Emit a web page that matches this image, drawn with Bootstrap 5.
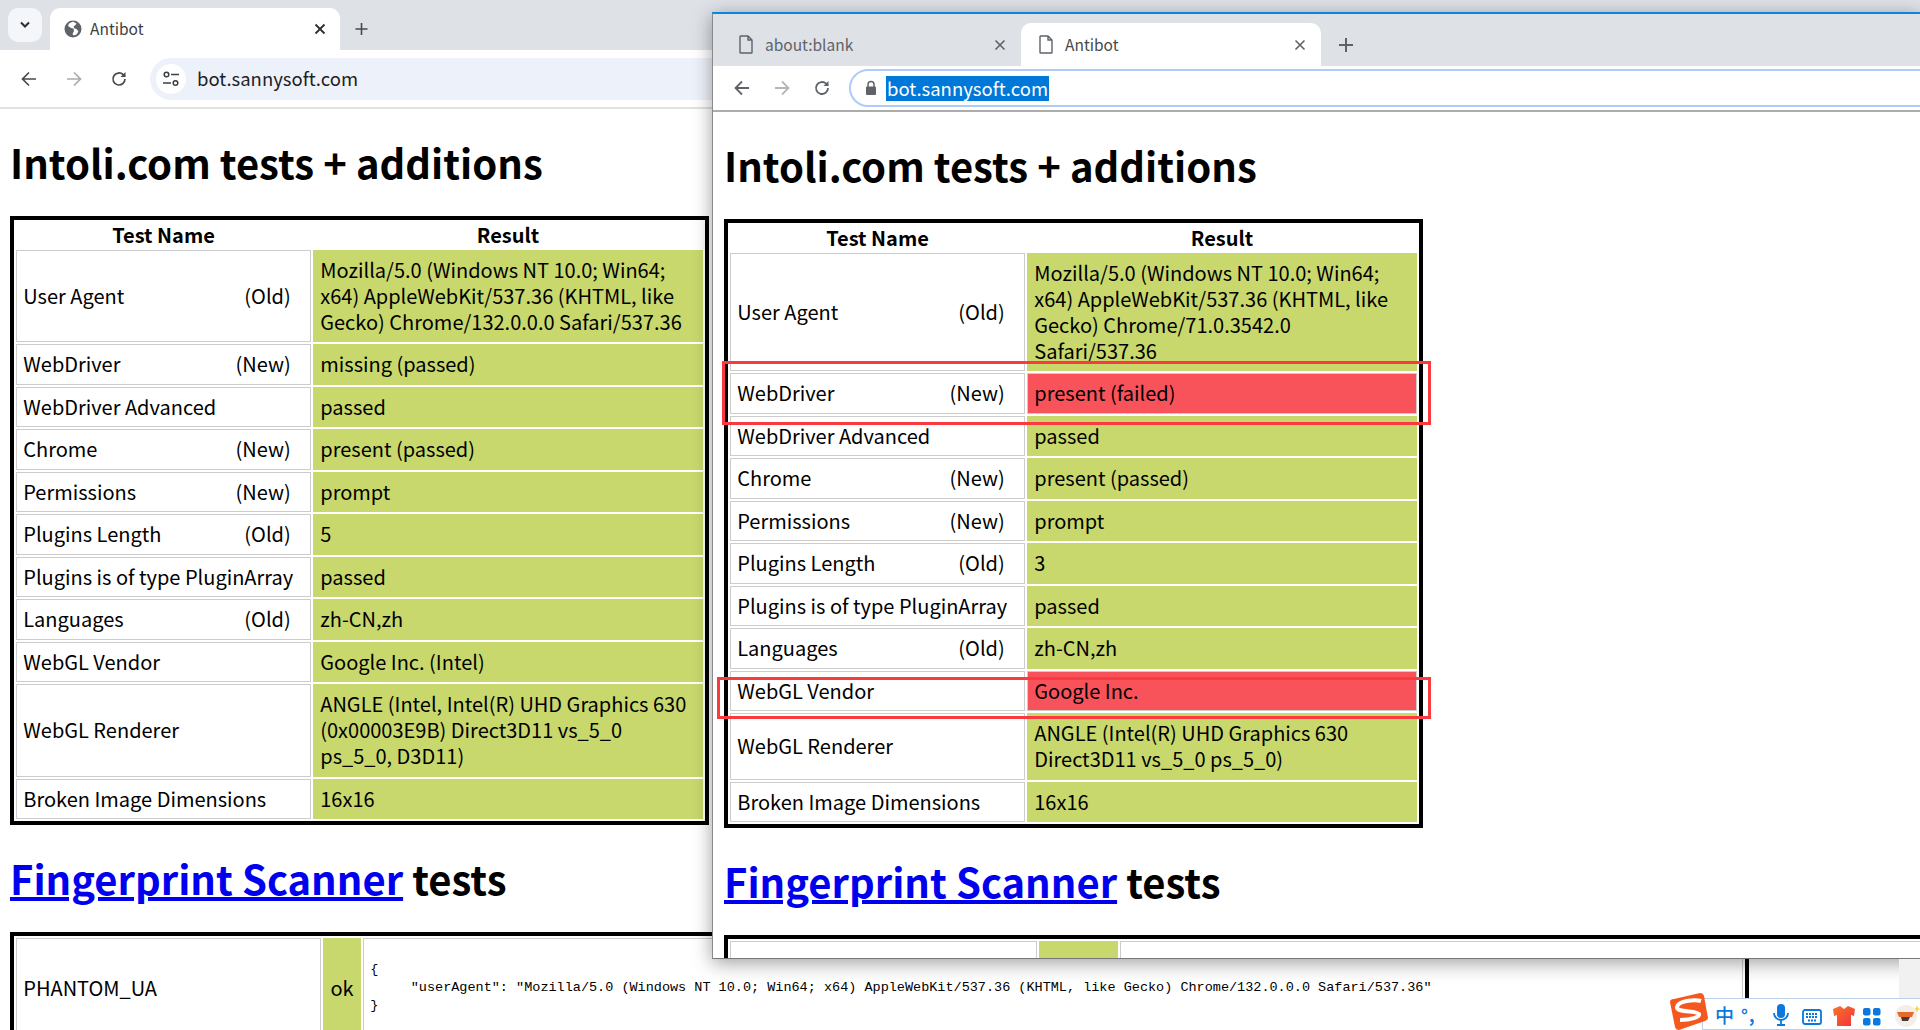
<!DOCTYPE html>
<html lang="en">
<head>
<meta charset="utf-8">
<title>Antibot</title>
<link href="https://cdn.jsdelivr.net/npm/bootstrap@5.3.0/dist/css/bootstrap.min.css" rel="stylesheet">
<style>
html,body{height:1030px;overflow:hidden;background:#fff;}
body{font-family:"Noto Sans CJK SC","Noto Sans",sans-serif;color:#000;position:relative;}
.win{background:#fff;overflow:hidden;}
.win-back{width:1920px;height:1030px;}
.win-front{position:absolute;left:712px;top:12px;right:0;height:947px;border-top:2px solid #0a86dc;border-left:1px solid #8a8a8a;border-bottom:1px solid #777;box-shadow:0 4px 18px rgba(0,0,0,.38);}
.strip-new{height:50px;background:#dee1e6;padding-left:8px;}
.strip-old{height:52px;background:#dee1e6;padding-top:9px;padding-left:8px;}
.list-btn{width:34px;height:34px;margin-top:8px;background:#f4f6fa;border-radius:10px;margin-right:8px;}
.tab-new{width:290px;height:42px;margin-top:8px;background:#fff;border-radius:10px 10px 0 0;padding:0 14px;font-size:15.5px;color:#3c4043;}
.tab-old{width:300px;height:43px;border-radius:10px 10px 0 0;padding:0 15px 0 18px;font-size:15.5px;color:#5f6368;}
.tab-on{background:#fff;color:#45494d;}
.tab-name{margin-left:8px;}
.tab-name-old{margin-left:12px;}
.plus-new{margin-left:14px;margin-top:8px;}
.plus-old{margin-left:17px;}
.bar-new{height:59px;border-bottom:2px solid #e1e1e1;border-radius:12px 0 0 0;margin-top:0;padding-left:6px;background:#fff;}
.bar-old{height:46px;border-bottom:2px solid #acacac;padding-left:9px;}
.bar-btn{width:45px;}
.bar-btn-old{width:40px;}
.pill-new{width:1400px;height:42px;margin-left:9px;background:#edf2fa;border-radius:21px;padding-left:6px;font-size:18.5px;color:#1f2124;}
.pill-old{flex:1;height:38px;margin-left:7px;margin-right:-40px;border:2px solid #aecbfa;border-radius:19px;padding-left:14px;font-size:18.5px;}
.tune{width:30px;height:30px;background:#fff;border-radius:50%;margin-right:11px;}
.sel-url{background:#0078d7;color:#fff;margin-left:9px;line-height:25px;height:25px;padding:0 1px;}
.sheet{padding-left:11px;}
.win-back .sheet{padding-left:10px;}
.big-title{font-size:40px;line-height:53px;font-weight:700;margin:26.8px 0;}
.big-title a{color:#0000ee;text-decoration:underline;}
.tbl{border:4px solid #000;border-collapse:separate;border-spacing:2px;table-layout:fixed;font-size:20px;line-height:26px;}
.tbl-a{width:699px;}
.tbl-b{width:1739px;}
.tbl-c{width:1300px;}
.tbl th{padding:0;text-align:center;font-weight:700;}
.tbl td{border:1px solid #ccc;padding:6.25px;vertical-align:middle;}
.tbl td.good{background:#c8d86d;border-color:#c8d86d;}
.tbl td.bad{background:#f8525b;border-color:#ccc;}
.age{padding-right:13px;}
.dump{font-family:"Liberation Mono",monospace;font-size:13.5px;line-height:18px;margin:16px 0;}
.shut{height:100px;}
.redbox{position:absolute;border:3px solid #fb3a3f;pointer-events:none;}
.rb1{left:722px;top:361px;width:709px;height:64px;}
.rb2{left:717px;top:677px;width:714px;height:42px;}
.ime{position:absolute;left:1702px;top:998px;width:218px;height:32px;background:#fff;border:1px solid #bcd0ec;border-right:0;gap:0;padding-left:12px;}
.ime-zh{font-family:"Noto Sans CJK SC",sans-serif;font-size:19px;font-weight:500;line-height:1;color:#0a78dc;width:29px;}
.ime-pt{font-size:17px;font-weight:700;line-height:1;color:#0a78dc;width:34px;letter-spacing:1px;}
.ime-slot{width:34px;}
.ime-logo{position:absolute;left:1670px;top:993px;}
.scroll-side{position:absolute;left:1899px;top:959px;width:21px;height:71px;background:#f1f1f1;}
</style>
</head>
<body>

<div class="win win-back">
  <div class="strip-new d-flex">
    <div class="list-btn d-flex align-items-center justify-content-center">
      <svg width="12" height="8" viewBox="0 0 12 8"><path d="M2 1.5 6 5.5 10 1.5" fill="none" stroke="#2b2f33" stroke-width="2"/></svg>
    </div>
    <div class="tab-new d-flex align-items-center">
      <svg width="18" height="18" viewBox="0 0 18 18"><circle cx="9" cy="9" r="8.5" fill="#5f6368"/><path d="M9 1.5 5 3.5 4 6l3 2 2.500.5.500 2.500-1.500 3 1 1.500 3-1 2-3-2-2.500-2-.5-1-2 2-1.500 1-1.500-2-1z" fill="#fff"/></svg>
      <span class="tab-name">Antibot</span>
      <svg class="ms-auto" width="12" height="12" viewBox="0 0 12 12"><path d="M1.500 1.500l9 9M10.500 1.500l-9 9" stroke="#2b2f33" stroke-width="1.800"/></svg>
    </div>
    <div class="plus-new d-flex align-items-center">
      <svg width="15" height="42" viewBox="0 0 15 42"><path d="M7.500 15v12M1.500 21h12" stroke="#45494d" stroke-width="1.600"/></svg>
    </div>
  </div>
  <div class="bar-new d-flex align-items-center">
    <div class="bar-btn d-flex justify-content-center">
      <svg width="18" height="18" viewBox="0 0 18 18"><path d="M16 9H3M9 2.500 2.500 9 9 15.500" fill="none" stroke="#474a4f" stroke-width="1.700"/></svg>
    </div>
    <div class="bar-btn d-flex justify-content-center">
      <svg width="18" height="18" viewBox="0 0 18 18"><path d="M2 9h13M9 2.500 15.500 9 9 15.500" fill="none" stroke="#a9acb0" stroke-width="1.700"/></svg>
    </div>
    <div class="bar-btn d-flex justify-content-center">
      <svg width="18" height="18" viewBox="0 0 18 18"><path d="M15 9a6 6 0 1 1-1.800-4.300L15 6.500" fill="none" stroke="#474a4f" stroke-width="1.700"/><path d="M15.500 2v5h-5z" fill="#474a4f"/></svg>
    </div>
    <div class="pill-new d-flex align-items-center">
      <div class="tune d-flex align-items-center justify-content-center">
        <svg width="18" height="18" viewBox="0 0 18 18"><circle cx="4.500" cy="4.500" r="2.300" fill="none" stroke="#3c4043" stroke-width="1.500"/><path d="M9 4.500h8M1 13h8" stroke="#3c4043" stroke-width="1.500"/><circle cx="13.500" cy="13" r="2.300" fill="none" stroke="#3c4043" stroke-width="1.500"/></svg>
      </div>
      <span>bot.sannysoft.com</span>
    </div>
  </div>
  <div class="sheet">
    <h1 class="big-title">Intoli.com tests + additions</h1>
    <table class="tbl tbl-a">
      <colgroup><col style="width:295px"><col></colgroup>
      <tr><th>Test Name</th><th>Result</th></tr>
      <tr><td><div class="d-flex justify-content-between"><span>User Agent</span><span class="age">(Old)</span></div></td><td class="good">Mozilla/5.0 (Windows NT 10.0; Win64; x64) AppleWebKit/537.36 (KHTML, like Gecko) Chrome/132.0.0.0 Safari/537.36</td></tr>
      <tr><td><div class="d-flex justify-content-between"><span>WebDriver</span><span class="age">(New)</span></div></td><td class="good">missing (passed)</td></tr>
      <tr><td>WebDriver Advanced</td><td class="good">passed</td></tr>
      <tr><td><div class="d-flex justify-content-between"><span>Chrome</span><span class="age">(New)</span></div></td><td class="good">present (passed)</td></tr>
      <tr><td><div class="d-flex justify-content-between"><span>Permissions</span><span class="age">(New)</span></div></td><td class="good">prompt</td></tr>
      <tr><td><div class="d-flex justify-content-between"><span>Plugins Length</span><span class="age">(Old)</span></div></td><td class="good">5</td></tr>
      <tr><td>Plugins is of type PluginArray</td><td class="good">passed</td></tr>
      <tr><td><div class="d-flex justify-content-between"><span>Languages</span><span class="age">(Old)</span></div></td><td class="good">zh-CN,zh</td></tr>
      <tr><td>WebGL Vendor</td><td class="good">Google Inc. (Intel)</td></tr>
      <tr><td>WebGL Renderer</td><td class="good">ANGLE (Intel, Intel(R) UHD Graphics 630 (0x00003E9B) Direct3D11 vs_5_0 ps_5_0, D3D11)</td></tr>
      <tr><td>Broken Image Dimensions</td><td class="good">16x16</td></tr>
    </table>
    <h2 class="big-title"><a href="#">Fingerprint Scanner</a> tests</h2>
    <table class="tbl tbl-b">
      <colgroup><col style="width:305px"><col style="width:38px"><col></colgroup>
      <tr>
        <td>PHANTOM_UA</td>
        <td class="good text-center px-0">ok</td>
        <td><pre class="dump">{
     "userAgent": "Mozilla/5.0 (Windows NT 10.0; Win64; x64) AppleWebKit/537.36 (KHTML, like Gecko) Chrome/132.0.0.0 Safari/537.36"
}</pre></td>
      </tr>
    </table>
  </div>
</div>

<div class="win win-front">
  <div class="strip-old d-flex">
    <div class="tab-old d-flex align-items-center">
      <svg width="14" height="19" viewBox="0 0 14 19"><path d="M1 1.500A.5.500 0 0 1 1.500 1H9l4 4v12.500a.5.500 0 0 1-.5.500h-11a.5.500 0 0 1-.5-.5zM9 1v4h4" fill="none" stroke="#5f6368" stroke-width="1.400"/></svg>
      <span class="tab-name-old">about:blank</span>
      <svg class="ms-auto" width="12" height="12" viewBox="0 0 12 12"><path d="M1.500 1.500l9 9M10.500 1.500l-9 9" stroke="#5f6368" stroke-width="1.600"/></svg>
    </div>
    <div class="tab-old tab-on d-flex align-items-center">
      <svg width="14" height="19" viewBox="0 0 14 19"><path d="M1 1.500A.5.500 0 0 1 1.500 1H9l4 4v12.500a.5.500 0 0 1-.5.500h-11a.5.500 0 0 1-.5-.5zM9 1v4h4" fill="none" stroke="#5f6368" stroke-width="1.400"/></svg>
      <span class="tab-name-old">Antibot</span>
      <svg class="ms-auto" width="12" height="12" viewBox="0 0 12 12"><path d="M1.500 1.500l9 9M10.500 1.500l-9 9" stroke="#5f6368" stroke-width="1.600"/></svg>
    </div>
    <div class="plus-old d-flex align-items-center">
      <svg width="16" height="43" viewBox="0 0 16 43"><path d="M8 15v14M1 22h14" stroke="#5f6368" stroke-width="2"/></svg>
    </div>
  </div>
  <div class="bar-old d-flex align-items-center">
    <div class="bar-btn-old d-flex justify-content-center">
      <svg width="18" height="18" viewBox="0 0 18 18"><path d="M16 9H3M9 2.500 2.500 9 9 15.500" fill="none" stroke="#5f6368" stroke-width="1.800"/></svg>
    </div>
    <div class="bar-btn-old d-flex justify-content-center">
      <svg width="18" height="18" viewBox="0 0 18 18"><path d="M2 9h13M9 2.500 15.500 9 9 15.500" fill="none" stroke="#b4b7bb" stroke-width="1.800"/></svg>
    </div>
    <div class="bar-btn-old d-flex justify-content-center">
      <svg width="18" height="18" viewBox="0 0 18 18"><path d="M15 9a6 6 0 1 1-1.800-4.300L15 6.500" fill="none" stroke="#5f6368" stroke-width="1.800"/><path d="M15.500 2v5h-5z" fill="#5f6368"/></svg>
    </div>
    <div class="pill-old d-flex align-items-center">
      <svg width="12" height="16" viewBox="0 0 12 16"><path d="M3 7V4.500a3 3 0 0 1 6 0V7" fill="none" stroke="#5f6368" stroke-width="1.500"/><rect x="1" y="6.500" width="10" height="8.500" rx="1" fill="#5f6368"/></svg>
      <span class="sel-url">bot.sannysoft.com</span>
    </div>
  </div>
  <div class="sheet">
    <h1 class="big-title">Intoli.com tests + additions</h1>
    <table class="tbl tbl-a">
      <colgroup><col style="width:295px"><col></colgroup>
      <tr><th>Test Name</th><th>Result</th></tr>
      <tr><td><div class="d-flex justify-content-between"><span>User Agent</span><span class="age">(Old)</span></div></td><td class="good">Mozilla/5.0 (Windows NT 10.0; Win64; x64) AppleWebKit/537.36 (KHTML, like Gecko) Chrome/71.0.3542.0 Safari/537.36</td></tr>
      <tr><td><div class="d-flex justify-content-between"><span>WebDriver</span><span class="age">(New)</span></div></td><td class="bad">present (failed)</td></tr>
      <tr><td>WebDriver Advanced</td><td class="good">passed</td></tr>
      <tr><td><div class="d-flex justify-content-between"><span>Chrome</span><span class="age">(New)</span></div></td><td class="good">present (passed)</td></tr>
      <tr><td><div class="d-flex justify-content-between"><span>Permissions</span><span class="age">(New)</span></div></td><td class="good">prompt</td></tr>
      <tr><td><div class="d-flex justify-content-between"><span>Plugins Length</span><span class="age">(Old)</span></div></td><td class="good">3</td></tr>
      <tr><td>Plugins is of type PluginArray</td><td class="good">passed</td></tr>
      <tr><td><div class="d-flex justify-content-between"><span>Languages</span><span class="age">(Old)</span></div></td><td class="good">zh-CN,zh</td></tr>
      <tr><td>WebGL Vendor</td><td class="bad">Google Inc.</td></tr>
      <tr><td>WebGL Renderer</td><td class="good">ANGLE (Intel(R) UHD Graphics 630 Direct3D11 vs_5_0 ps_5_0)</td></tr>
      <tr><td>Broken Image Dimensions</td><td class="good">16x16</td></tr>
    </table>
    <h2 class="big-title"><a href="#">Fingerprint Scanner</a> tests</h2>
    <table class="tbl tbl-c">
      <colgroup><col style="width:307px"><col style="width:79px"><col></colgroup>
      <tr><td class="shut"></td><td class="good shut"></td><td class="shut"></td></tr>
    </table>
  </div>
</div>

<div class="scroll-side"></div>
<div class="redbox rb1"></div>
<div class="redbox rb2"></div>

<div class="ime d-flex align-items-center">
  <span class="ime-zh">中</span>
  <span class="ime-pt">°,</span>
  <span class="ime-slot"><svg width="18" height="24" viewBox="0 0 18 24"><rect x="5" y="1" width="8" height="14" rx="4" fill="#0a78dc"/><path d="M2 10a7 7 0 0 0 14 0M9 17v4M5 22h8" fill="none" stroke="#0a78dc" stroke-width="1.800"/></svg></span>
  <span class="ime-slot"><svg width="20" height="16" viewBox="0 0 20 16"><rect x="1" y="1" width="18" height="14" rx="2" fill="none" stroke="#0a78dc" stroke-width="1.800"/><path d="M4 5h12M4 8h12M6 11.500h8" stroke="#0a78dc" stroke-width="1.800" stroke-dasharray="2 1"/></svg></span>
  <span class="ime-slot"><svg width="22" height="20" viewBox="0 0 22 20"><defs><linearGradient id="shirt" x1="0" y1="0" x2="1" y2="1"><stop offset="0" stop-color="#f5762a"/><stop offset="1" stop-color="#f6303c"/></linearGradient></defs><path d="M7 0 0 3l1 7 3-1v11h14V9l3 1 1-7-7-3-4 3z" fill="url(#shirt)"/></svg></span>
  <span class="ime-slot"><svg width="18" height="18" viewBox="0 0 18 18" fill="#0a78dc"><rect x="0" y="0" width="7.500" height="7.500" rx="2"/><rect x="10" y="0" width="7.500" height="7.500" rx="2"/><rect x="0" y="10" width="7.500" height="7.500" rx="2"/><rect x="10" y="10" width="7.500" height="7.500" rx="2"/></svg></span>
  <span><svg width="26" height="26" viewBox="0 0 26 26"><circle cx="12" cy="14" r="11" fill="#f3eeea"/><path d="M3 10h17l-2 5H5z" fill="#e8692a"/><path d="M7 15h9l-2 4H8z" fill="#4a3a30"/><path d="M23 3l1 3 2 1-2 1-1 3-1-3-2-1 2-1z" fill="#f6d64a"/></svg></span>
</div>
<svg class="ime-logo" width="38" height="37" viewBox="0 0 38 37">
  <path d="M4 6 30 0q3 0 4 3l4 22q0 2-3 3L9 37q-3 0-4-3L0 9q0-3 4-3z" fill="#f5581f"/>
  <path d="M31 8C24 6 8 8 7 14c-1 6 20 3 22 7 1 3-8 6-19 6M7 14" fill="none" stroke="#fff" stroke-width="4"/>
</svg>
</body>
</html>
